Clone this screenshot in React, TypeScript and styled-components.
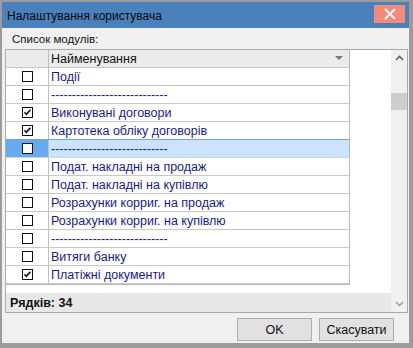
import React from 'react';
import styled, {createGlobalStyle} from 'styled-components';

const GlobalStyle = createGlobalStyle`
  *, *::before, *::after {
    margin: 0;
    padding: 0;
    box-sizing: border-box;
  }
  html, body {
    width: 100%;
    height: 100%;
    background: #ffffff;
  }
  body {
    font-family: 'Liberation Sans', Arial, sans-serif;
    font-size: 12px;
    color: #000;
  }
`;

const Window = styled.div`
  width: 413px;
  height: 348px;
  display: flex;
  flex-direction: column;
  background: #f0f0f0;
  border-style: solid;
  border-color: #9c9c9c;
  border-width: 2px 4px 5px 2px;
`;

const TitleBar = styled.div`
  height: 26px;
  flex-shrink: 0;
  background: #4a80bc;
  display: flex;
  align-items: center;
  justify-content: space-between;
  padding: 0 4px 0 5px;
`;

const Title = styled.span`
  font-size: 12px;
  color: #0a0a0a;
  padding-top: 1px;
`;

const CloseBtn = styled.div`
  width: 31px;
  height: 18px;
  background: #f28b7c;
  display: flex;
  align-items: center;
  justify-content: center;
  align-self: flex-start;
  margin-top: 3px;
`;

const Body = styled.div`
  flex: 1;
  display: flex;
  flex-direction: column;
  padding: 3px 0 0 3px;
`;

const Label = styled.div`
  height: 18px;
  padding-left: 7px;
  line-height: 17px;
  font-size: 11.5px;
  color: #111;
`;

const Grid = styled.div`
  width: 403px;
  height: 264px;
  border: 1px solid #aaaaaa;
  background: #ffffff;
  display: flex;
  font-size: 12.5px;
`;

const Main = styled.div`
  flex: 1;
  display: flex;
  flex-direction: column;
`;

const Table = styled.div`
  width: 344px;
  border-right: 1px solid #b8b8b8;
  border-bottom: 1px solid #b8b8b8;
`;

const Row = styled.div<{ $head?: boolean; $selected?: boolean }>`
  display: flex;
  border-bottom: 1px solid ${p => (p.$selected ? '#c8d8ea' : '#c8c8c8')};
  border-top: ${p => (p.$selected ? '1px solid #7aa3d6' : 'none')};
  margin-top: ${p => (p.$selected ? '-1px' : '0')};
  height: ${p => (p.$selected ? '19px' : '18px')};
  background: ${p => (p.$head ? '#ebebeb' : p.$selected ? '#cce4fb' : '#ffffff')};
`;

const CheckCell = styled.div<{ $selected?: boolean }>`
  width: 43px;
  flex-shrink: 0;
  border-right: 1px solid #c0c0c0;
  display: flex;
  align-items: center;
  justify-content: center;
  background: ${p => (p.$selected ? '#66aaf0' : 'transparent')};
`;

const NameCell = styled.div<{ $head?: boolean }>`
  flex: 1;
  display: flex;
  align-items: center;
  justify-content: space-between;
  padding: 0 6px 0 2px;
  color: ${p => (p.$head ? '#111' : '#1a1a8c')};
  white-space: nowrap;
`;

const Filler = styled.div`
  flex: 1;
`;

const Footer = styled.div`
  height: 19px;
  background: #e8e8e8;
  display: flex;
  align-items: center;
  padding-left: 4px;
  font-weight: bold;
  color: #111;
`;

const ScrollBar = styled.div`
  width: 16px;
  background: #f0f0f0;
  display: flex;
  flex-direction: column;
  align-items: center;
  justify-content: space-between;
  position: relative;
  padding: 5px 0;
`;

const Thumb = styled.div`
  position: absolute;
  left: 0;
  top: 43px;
  width: 16px;
  height: 17px;
  background: #cdcdcd;
`;

const Buttons = styled.div`
  display: flex;
  justify-content: flex-end;
  gap: 7px;
  padding: 5px 15px 0 0;
`;

const Button = styled.button`
  width: 75px;
  height: 23px;
  border: 1px solid #adadad;
  background: #e1e1e1;
  font-family: 'Liberation Sans', Arial, sans-serif;
  font-size: 12.5px;
  color: #111;
`;

const Check: React.FC<{ on?: boolean }> = ({on}) => (
  <svg width="11" height="11" viewBox="0 0 11 11">
    <rect x="0.5" y="0.5" width="10" height="10" fill="#fff" stroke="#111" />
    {on && <path d="M2.5 5.2 L4.4 7.4 L8.5 2.8" fill="none" stroke="#111" strokeWidth="1.6" />}
  </svg>
);

const dash = '----------------------------';

const rows = [
  {name: 'Події'},
  {name: dash},
  {name: 'Виконувані договори', on: true},
  {name: 'Картотека обліку договорів', on: true},
  {name: dash, selected: true},
  {name: 'Подат. накладні на продаж'},
  {name: 'Подат. накладні на купівлю'},
  {name: 'Розрахунки корриг. на продаж'},
  {name: 'Розрахунки корриг. на купівлю'},
  {name: dash},
  {name: 'Витяги банку'},
  {name: 'Платіжні документи', on: true},
];

export default function App() {
  return (
    <>
      <GlobalStyle />
      <Window>
        <TitleBar>
          <Title>Налаштування користувача</Title>
          <CloseBtn>
            <svg width="12" height="12" viewBox="0 0 12 12">
              <path d="M1 1 L11 11 M11 1 L1 11" stroke="#fff" strokeWidth="1.8" />
            </svg>
          </CloseBtn>
        </TitleBar>
        <Body>
          <Label>Список модулів:</Label>
          <Grid>
            <Main>
              <Table>
                <Row $head>
                  <CheckCell />
                  <NameCell $head>
                    Найменування
                    <svg width="8" height="5" viewBox="0 0 8 5">
                      <path d="M0 0 L8 0 L4 4 Z" fill="#777" />
                    </svg>
                  </NameCell>
                </Row>
                {rows.map((r, i) => (
                  <Row key={i} $selected={r.selected}>
                    <CheckCell $selected={r.selected}>
                      <Check on={r.on} />
                    </CheckCell>
                    <NameCell>{r.name}</NameCell>
                  </Row>
                ))}
              </Table>
              <Filler />
              <Footer>Рядків: 34</Footer>
            </Main>
            <ScrollBar>
              <svg width="9" height="6" viewBox="0 0 9 6">
                <path d="M1 5 L4.5 1.5 L8 5" fill="none" stroke="#606060" strokeWidth="1.6" />
              </svg>
              <Thumb />
              <svg width="9" height="6" viewBox="0 0 9 6">
                <path d="M1 1 L4.5 4.5 L8 1" fill="none" stroke="#9a9a9a" strokeWidth="1.4" />
              </svg>
            </ScrollBar>
          </Grid>
          <Buttons>
            <Button>OK</Button>
            <Button>Скасувати</Button>
          </Buttons>
        </Body>
      </Window>
    </>
  );
}
